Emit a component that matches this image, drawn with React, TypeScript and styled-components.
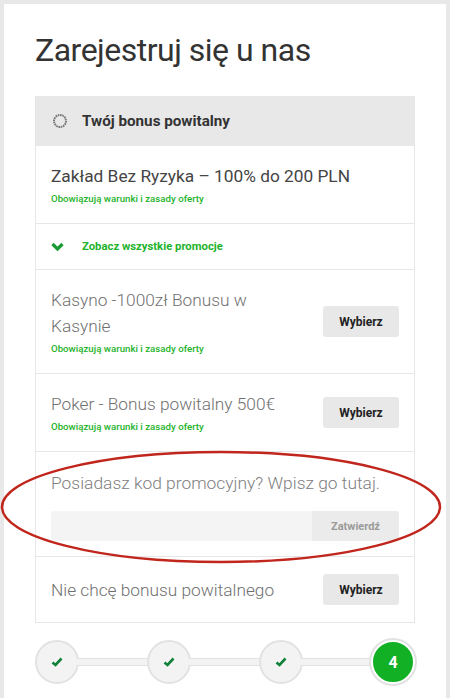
import React from 'react'
import styled, { createGlobalStyle } from 'styled-components'

const GlobalStyle = createGlobalStyle`
  html, body {
    margin: 0;
    padding: 0;
    background: #e8e8e8;
    font-family: Roboto, 'Liberation Sans', Arial, sans-serif;
  }
`

const Page = styled.div`
  position: relative;
  margin: 4px 4px 0 4px;
  padding: 26px 31px 40px 31px;
  background: #fff;
  min-height: 660px;
`

const Title = styled.h1`
  margin: 0 0 26px 0;
  font-size: 32px;
  line-height: 40px;
  letter-spacing: -0.5px;
  font-weight: 400;
  color: #333;
`

const Panel = styled.div`
  border: 1px solid #e6e6e6;
  border-top: none;
`

const PanelHeader = styled.div`
  display: flex;
  align-items: center;
  gap: 14px;
  height: 50px;
  padding: 0 16px;
  background: #e8e8e8;
  font-size: 15.2px;
  font-weight: 700;
  color: #333;
`

const Row = styled.div<{ $last?: boolean }>`
  display: flex;
  align-items: center;
  gap: 24px;
  padding: 17px 15px 17px 15px;
  border-bottom: ${({ $last }) => ($last ? 'none' : '1px solid #e6e6e6')};
`

const RowBody = styled.div`
  flex: 1;
  min-width: 0;
`

const OfferName = styled.div<{ $dark?: boolean }>`
  font-size: 17.3px;
  line-height: 26px;
  font-weight: ${({ $dark }) => ($dark ? 400 : 300)};
  color: ${({ $dark }) => ($dark ? '#444' : '#6f6f6f')};
`

const Terms = styled.div`
  margin-top: 3px;
  font-size: 9.7px;
  line-height: 14px;
  font-weight: 500;
  color: #1eb32b;
`

const MoreRow = styled.div`
  display: flex;
  align-items: center;
  gap: 18px;
  height: 45px;
  padding: 0 15px;
  border-bottom: 1px solid #e6e6e6;
  font-size: 11.3px;
  font-weight: 700;
  color: #1eb32b;
`

const PickButton = styled.button`
  flex: none;
  width: 76px;
  height: 31px;
  border: none;
  border-radius: 3px;
  background: #e8e8e8;
  font-family: inherit;
  font-size: 12px;
  font-weight: 700;
  color: #222;
`

const PromoRow = styled.div`
  padding: 18px 15px 15px 15px;
  border-bottom: 1px solid #e6e6e6;
`

const PromoText = styled.div`
  font-size: 17.4px;
  line-height: 26px;
  font-weight: 300;
  color: #808080;
`

const PromoField = styled.div`
  display: flex;
  height: 30px;
  margin-top: 15px;
  border-radius: 3px;
  overflow: hidden;
  background: #f4f4f4;
`

const PromoInput = styled.input`
  flex: 1;
  min-width: 0;
  border: none;
  background: transparent;
  outline: none;
`

const PromoSubmit = styled.button`
  width: 87px;
  border: none;
  background: #ebebeb;
  font-family: inherit;
  font-size: 11px;
  font-weight: 700;
  color: #9a9a9a;
`

const Steps = styled.div`
  display: flex;
  align-items: center;
  margin-top: 17px;
`

const Step = styled.div<{ $active?: boolean }>`
  flex: none;
  display: flex;
  align-items: center;
  justify-content: center;
  width: 40px;
  height: 40px;
  border-radius: 50%;
  border: 2px solid ${({ $active }) => ($active ? '#fff' : '#e2e2e2')};
  box-shadow: ${({ $active }) => ($active ? '0 0 0 2px #e2e2e2' : 'none')};
  background: ${({ $active }) => ($active ? '#12b025' : '#f3f3f3')};
  color: #fff;
  font-size: 16px;
  font-weight: 700;
`

const Connector = styled.div`
  flex: 1;
  height: 6px;
  margin: 0 -2px;
  background: #f3f3f3;
  border-top: 1px solid #e2e2e2;
  border-bottom: 1px solid #e2e2e2;
`

const Annotation = styled.svg`
  position: absolute;
  left: -4px;
  top: -4px;
  pointer-events: none;
`

const Spinner = () => (
  <svg width="16" height="16" viewBox="0 0 16 16">
    <circle cx="8" cy="8" r="6" fill="none" stroke="#777" strokeWidth="2" strokeDasharray="1.6 0.7" />
  </svg>
)

const Chevron = () => (
  <svg width="13" height="10" viewBox="0 0 13 10">
    <polyline points="1.5,2 6.5,7 11.5,2" fill="none" stroke="#1a9a33" strokeWidth="3.2" />
  </svg>
)

const Check = () => (
  <svg width="12" height="10" viewBox="0 0 12 10">
    <polyline points="1.5,5.5 4.5,8 10.5,1.5" fill="none" stroke="#12813a" strokeWidth="2.6" />
  </svg>
)

const offers = [
  { name: 'Kasyno -1000zł Bonusu w Kasynie' },
  { name: 'Poker - Bonus powitalny 500€' },
]

const App = () => {
  return (
    <>
      <GlobalStyle />
      <Page>
        <Title>Zarejestruj się u nas</Title>
        <Panel>
          <PanelHeader>
            <Spinner />
            Twój bonus powitalny
          </PanelHeader>
          <Row>
            <RowBody>
              <OfferName $dark>Zakład Bez Ryzyka – 100% do 200 PLN</OfferName>
              <Terms>Obowiązują warunki i zasady oferty</Terms>
            </RowBody>
          </Row>
          <MoreRow>
            <Chevron />
            Zobacz wszystkie promocje
          </MoreRow>
          {offers.map((o) => (
            <Row key={o.name}>
              <RowBody>
                <OfferName>{o.name}</OfferName>
                <Terms>Obowiązują warunki i zasady oferty</Terms>
              </RowBody>
              <PickButton>Wybierz</PickButton>
            </Row>
          ))}
          <PromoRow>
            <PromoText>Posiadasz kod promocyjny? Wpisz go tutaj.</PromoText>
            <PromoField>
              <PromoInput />
              <PromoSubmit>Zatwierdź</PromoSubmit>
            </PromoField>
          </PromoRow>
          <Row $last>
            <RowBody>
              <OfferName>Nie chcę bonusu powitalnego</OfferName>
            </RowBody>
            <PickButton>Wybierz</PickButton>
          </Row>
        </Panel>
        <Steps>
          <Step><Check /></Step>
          <Connector />
          <Step><Check /></Step>
          <Connector />
          <Step><Check /></Step>
          <Connector />
          <Step $active>4</Step>
        </Steps>
        <Annotation width="450" height="698" viewBox="0 0 450 698">
          <ellipse cx="221" cy="507" rx="219" ry="55" fill="none" stroke="#c1261d" strokeWidth="2.5" />
        </Annotation>
      </Page>
    </>
  )
}

export default App
